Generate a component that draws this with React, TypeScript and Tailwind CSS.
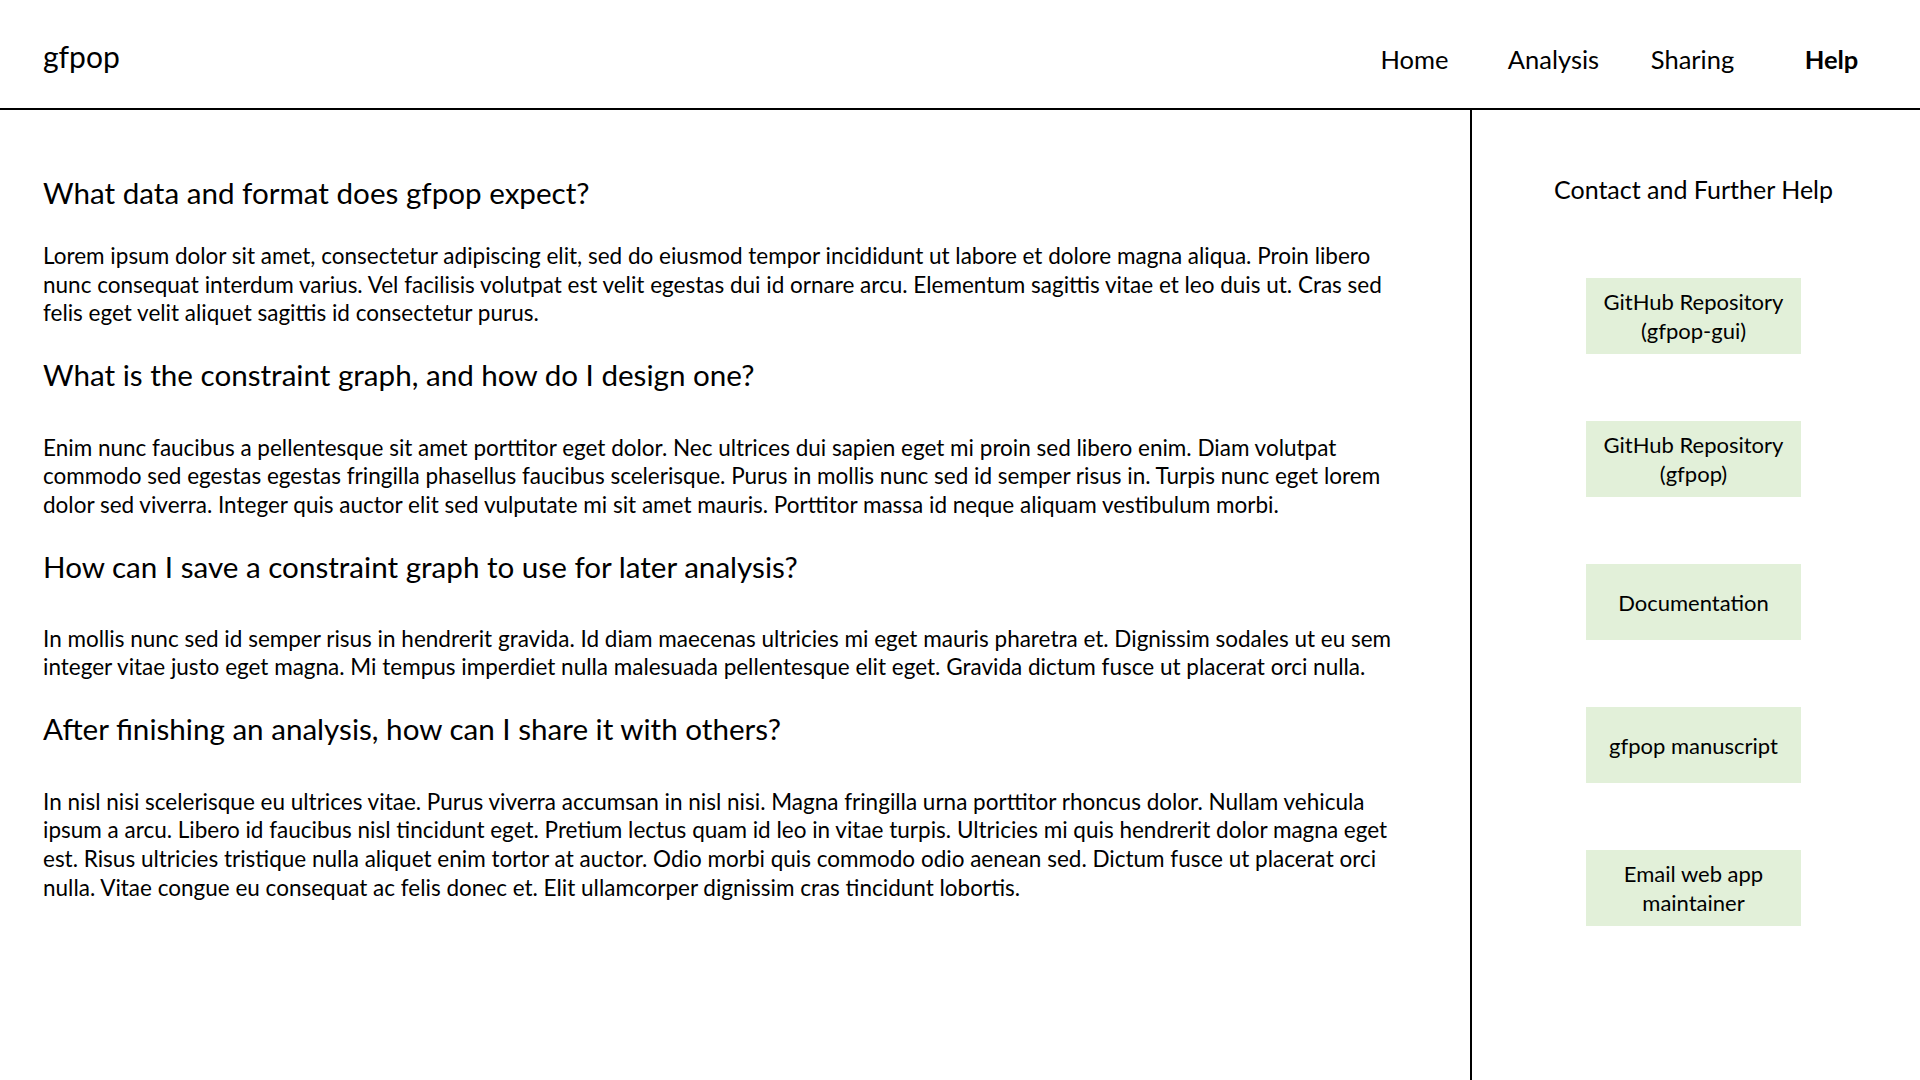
import React from "react";

const sections: { q: string; lines: string[]; gap: string }[] = [
  {
    q: "What data and format does gfpop expect?",
    gap: "mt-[29px]",
    lines: [
      "Lorem ipsum dolor sit amet, consectetur adipiscing elit, sed do eiusmod tempor incididunt ut labore et dolore magna aliqua. Proin libero",
      "nunc consequat interdum varius. Vel facilisis volutpat est velit egestas dui id ornare arcu. Elementum sagittis vitae et leo duis ut. Cras sed",
      "felis eget velit aliquet sagittis id consectetur purus.",
    ],
  },
  {
    q: "What is the constraint graph, and how do I design one?",
    gap: "mt-[39px]",
    lines: [
      "Enim nunc faucibus a pellentesque sit amet porttitor eget dolor. Nec ultrices dui sapien eget mi proin sed libero enim. Diam volutpat",
      "commodo sed egestas egestas fringilla phasellus faucibus scelerisque. Purus in mollis nunc sed id semper risus in. Turpis nunc eget lorem",
      "dolor sed viverra. Integer quis auctor elit sed vulputate mi sit amet mauris. Porttitor massa id neque aliquam vestibulum morbi.",
    ],
  },
  {
    q: "How can I save a constraint graph to use for later analysis?",
    gap: "mt-[38px]",
    lines: [
      "In mollis nunc sed id semper risus in hendrerit gravida. Id diam maecenas ultricies mi eget mauris pharetra et. Dignissim sodales ut eu sem",
      "integer vitae justo eget magna. Mi tempus imperdiet nulla malesuada pellentesque elit eget. Gravida dictum fusce ut placerat orci nulla.",
    ],
  },
  {
    q: "After finishing an analysis, how can I share it with others?",
    gap: "mt-[39px]",
    lines: [
      "In nisl nisi scelerisque eu ultrices vitae. Purus viverra accumsan in nisl nisi. Magna fringilla urna porttitor rhoncus dolor. Nullam vehicula",
      "ipsum a arcu. Libero id faucibus nisl tincidunt eget. Pretium lectus quam id leo in vitae turpis. Ultricies mi quis hendrerit dolor magna eget",
      "est. Risus ultricies tristique nulla aliquet enim tortor at auctor. Odio morbi quis commodo odio aenean sed. Dictum fusce ut placerat orci",
      "nulla. Vitae congue eu consequat ac felis donec et. Elit ullamcorper dignissim cras tincidunt lobortis.",
    ],
  },
];

const links: string[][] = [
  ["GitHub Repository", "(gfpop-gui)"],
  ["GitHub Repository", "(gfpop)"],
  ["Documentation"],
  ["gfpop manuscript"],
  ["Email web app", "maintainer"],
];

export default function App() {
  return (
    <div className="flex h-[1080px] w-[1920px] flex-col overflow-hidden bg-white font-['Lato',_'Open_Sans',_sans-serif] text-black">
      <header className="flex h-[110px] shrink-0 items-center justify-between border-b-2 border-black pl-[43px] pr-[19px]">
        <div className="pt-[4px] text-[30px] leading-[40px]">gfpop</div>
        <nav className="flex pt-[9px] text-[25.5px] leading-[34px]">
          <a className="w-[139px] text-center">Home</a>
          <a className="w-[139px] text-center">Analysis</a>
          <a className="w-[139px] text-center">Sharing</a>
          <a className="w-[139px] text-center font-bold">Help</a>
        </nav>
      </header>
      <div className="flex min-h-0 flex-1">
        <main className="w-[1472px] shrink-0 border-r-2 border-black pl-[43px] pt-[63px]">
          {sections.map((s, i) => (
            <section key={i} className={i === 0 ? "" : "mt-[27px]"}>
              <h2 className="whitespace-nowrap text-[29.6px] leading-[40px]">{s.q}</h2>
              <p className={`${s.gap} whitespace-nowrap text-[22.5px] leading-[28.6px]`}>
                {s.lines.map((l, j) => (
                  <span key={j} className="block">
                    {l}
                  </span>
                ))}
              </p>
            </section>
          ))}
        </main>
        <aside className="flex flex-1 flex-col pl-[114px] pt-[62px]">
          <div className="flex w-[215px] flex-col items-center">
            <h3 className="whitespace-nowrap text-[25px] leading-[34px]">Contact and Further Help</h3>
            <div className="mt-[72px] flex flex-col gap-[67px]">
              {links.map((l, i) => (
                <a
                  key={i}
                  className="flex h-[76px] w-[215px] flex-col items-center justify-center bg-[#e2f0d9] text-center text-[22px] leading-[29px]"
                >
                  {l.map((t, j) => (
                    <span key={j}>{t}</span>
                  ))}
                </a>
              ))}
            </div>
          </div>
        </aside>
      </div>
    </div>
  );
}
